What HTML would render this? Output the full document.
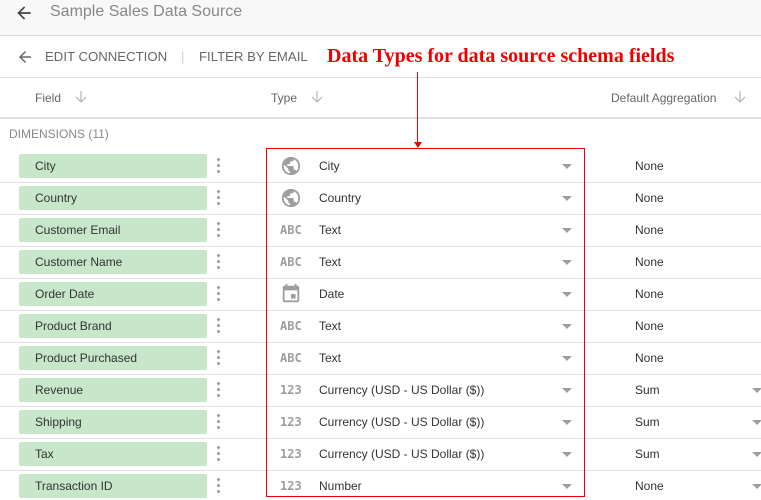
<!DOCTYPE html><html><head><style>
body{margin:0;width:761px;height:500px;overflow:hidden;background:#fff;font-family:"Liberation Sans",Arial,sans-serif;position:relative}
.a{position:absolute}
.t{font-size:12px;color:#333}
.chip{position:absolute;left:19px;width:188px;height:24px;background:#c8e6c9;border-radius:2px;font-size:12px;color:#333;line-height:24px;text-indent:16px}
.keb{position:absolute;left:217px;width:3px}
.keb i{display:block;width:3px;height:3px;border-radius:50%;background:#9e9e9e;margin-bottom:3px}
.sep{position:absolute;left:0;width:761px;height:1px;background:#e0e0e0}
.dd{position:absolute;width:0;height:0;border-left:5px solid transparent;border-right:5px solid transparent;border-top:5px solid #9e9e9e}
.ic{position:absolute;left:280px;font-size:12px;font-weight:bold;color:#9e9e9e;font-family:"DejaVu Sans Mono",monospace}
</style></head><body>
<div class="a" style="left:0;top:0;width:761px;height:35px;background:#f8f8f8;border-bottom:1px solid #ddd"></div>
<svg class="a" style="left:14px;top:3px" width="20" height="20" viewBox="0 0 24 24"><path d="M20 11H7.8l5.6-5.6L12 4l-8 8 8 8 1.4-1.4L7.8 13H20z" fill="#444"/></svg>
<div class="a" style="left:50px;top:3px;font-size:16px;color:#888">Sample Sales Data Source</div>
<svg class="a" style="left:16px;top:48px" width="18" height="18" viewBox="0 0 24 24"><path d="M20 11H7.8l5.6-5.6L12 4l-8 8 8 8 1.4-1.4L7.8 13H20z" fill="#666"/></svg>
<div class="a" style="left:45px;top:49px;font-size:13.2px;color:#666">EDIT CONNECTION</div>
<div class="a" style="left:181px;top:49px;font-size:13px;color:#ccc">|</div>
<div class="a" style="left:199px;top:49px;font-size:13.2px;color:#666">FILTER BY EMAIL</div>
<div class="a" style="left:327px;top:45px;font-size:20px;font-weight:bold;color:#e00;font-family:'Liberation Serif',serif">Data Types for data source schema fields</div>
<div class="a" style="left:0;top:77px;width:761px;height:1px;background:#e0e0e0"></div>
<div class="a" style="left:35px;top:91px;font-size:12px;color:#666">Field</div>
<svg class="a" style="left:74px;top:90px" width="14" height="14" viewBox="0 0 14 14"><path d="M7 1v11M2 7l5 5 5-5" stroke="#bbb" stroke-width="1.3" fill="none"/></svg>
<div class="a" style="left:271px;top:91px;font-size:12px;color:#666">Type</div>
<svg class="a" style="left:310px;top:90px" width="14" height="14" viewBox="0 0 14 14"><path d="M7 1v11M2 7l5 5 5-5" stroke="#bbb" stroke-width="1.3" fill="none"/></svg>
<div class="a" style="left:611px;top:91px;font-size:12px;color:#666">Default Aggregation</div>
<svg class="a" style="left:733px;top:90px" width="14" height="14" viewBox="0 0 14 14"><path d="M7 1v11M2 7l5 5 5-5" stroke="#bbb" stroke-width="1.3" fill="none"/></svg>
<div class="a" style="left:0;top:117px;width:761px;height:2px;background:#e0e0e0"></div>
<div class="a" style="left:9px;top:127px;font-size:12px;color:#888">DIMENSIONS (11)</div>
<div class="a" style="left:417px;top:72px;width:1px;height:72px;background:#e00"></div>
<div class="a" style="left:414px;top:142px;width:0;height:0;border-left:4px solid transparent;border-right:4px solid transparent;border-top:6px solid #e00"></div>
<div id="rows"></div>
<script>
var d=[["City","globe","City","None"],["Country","globe","Country","None"],["Customer Email","ABC","Text","None"],["Customer Name","ABC","Text","None"],["Order Date","cal","Date","None"],["Product Brand","ABC","Text","None"],["Product Purchased","ABC","Text","None"],["Revenue","123","Currency (USD - US Dollar ($))","Sum"],["Shipping","123","Currency (USD - US Dollar ($))","Sum"],["Tax","123","Currency (USD - US Dollar ($))","Sum"],["Transaction ID","123","Number","None"]];
var h="";
d.forEach(function(r,i){var y=150+32*i;
h+='<div class="chip" style="top:'+(y+4)+'px">'+r[0]+'</div>';
h+='<div class="keb" style="top:'+(y+8)+'px"><i></i><i></i><i></i></div>';
if(r[1]=="globe")h+='<svg class="a" style="left:280px;top:'+(y+5)+'px" width="22" height="22" viewBox="0 0 24 24"><path fill="#9e9e9e" d="M12 2C6.48 2 2 6.48 2 12s4.48 10 10 10 10-4.48 10-10S17.52 2 12 2zm-1 17.93c-3.95-.49-7-3.85-7-7.93 0-.62.08-1.21.21-1.79L9 15v1c0 1.1.9 2 2 2v1.93zm6.9-2.54c-.26-.81-1-1.39-1.9-1.39h-1v-3c0-.55-.45-1-1-1H8v-2h2c.55 0 1-.45 1-1V7h2c1.1 0 2-.9 2-2v-.41c2.93 1.19 5 4.06 5 7.41 0 2.08-.8 3.97-2.1 5.39z"/></svg>';
else if(r[1]=="cal")h+='<svg class="a" style="left:280px;top:'+(y+5)+'px" width="22" height="22" viewBox="0 0 24 24"><path fill="#9e9e9e" d="M17 12h-5v5h5v-5zM16 1v2H8V1H6v2H5c-1.11 0-2 .9-2 2v14c0 1.1.89 2 2 2h14c1.1 0 2-.9 2-2V5c0-1.1-.9-2-2-2h-1V1h-2zm3 18H5V8h14v11z"/></svg>';
else h+='<div class="ic" style="top:'+(y+9)+'px">'+r[1]+'</div>';
h+='<div class="a t" style="left:319px;top:'+(y+9)+'px">'+r[2]+'</div>';
h+='<div class="dd" style="left:562px;top:'+(y+14)+'px"></div>';
h+='<div class="a t" style="left:635px;top:'+(y+9)+'px">'+r[3]+'</div>';
if(i>=7)h+='<div class="dd" style="left:752px;top:'+(y+14)+'px"></div>';
if(i<10)h+='<div class="sep" style="top:'+(y+32)+'px"></div>';
});
document.getElementById("rows").innerHTML=h;
</script>
<div class="a" style="left:266px;top:148px;width:317px;height:347px;border:1px solid #e00"></div>
</body></html>
